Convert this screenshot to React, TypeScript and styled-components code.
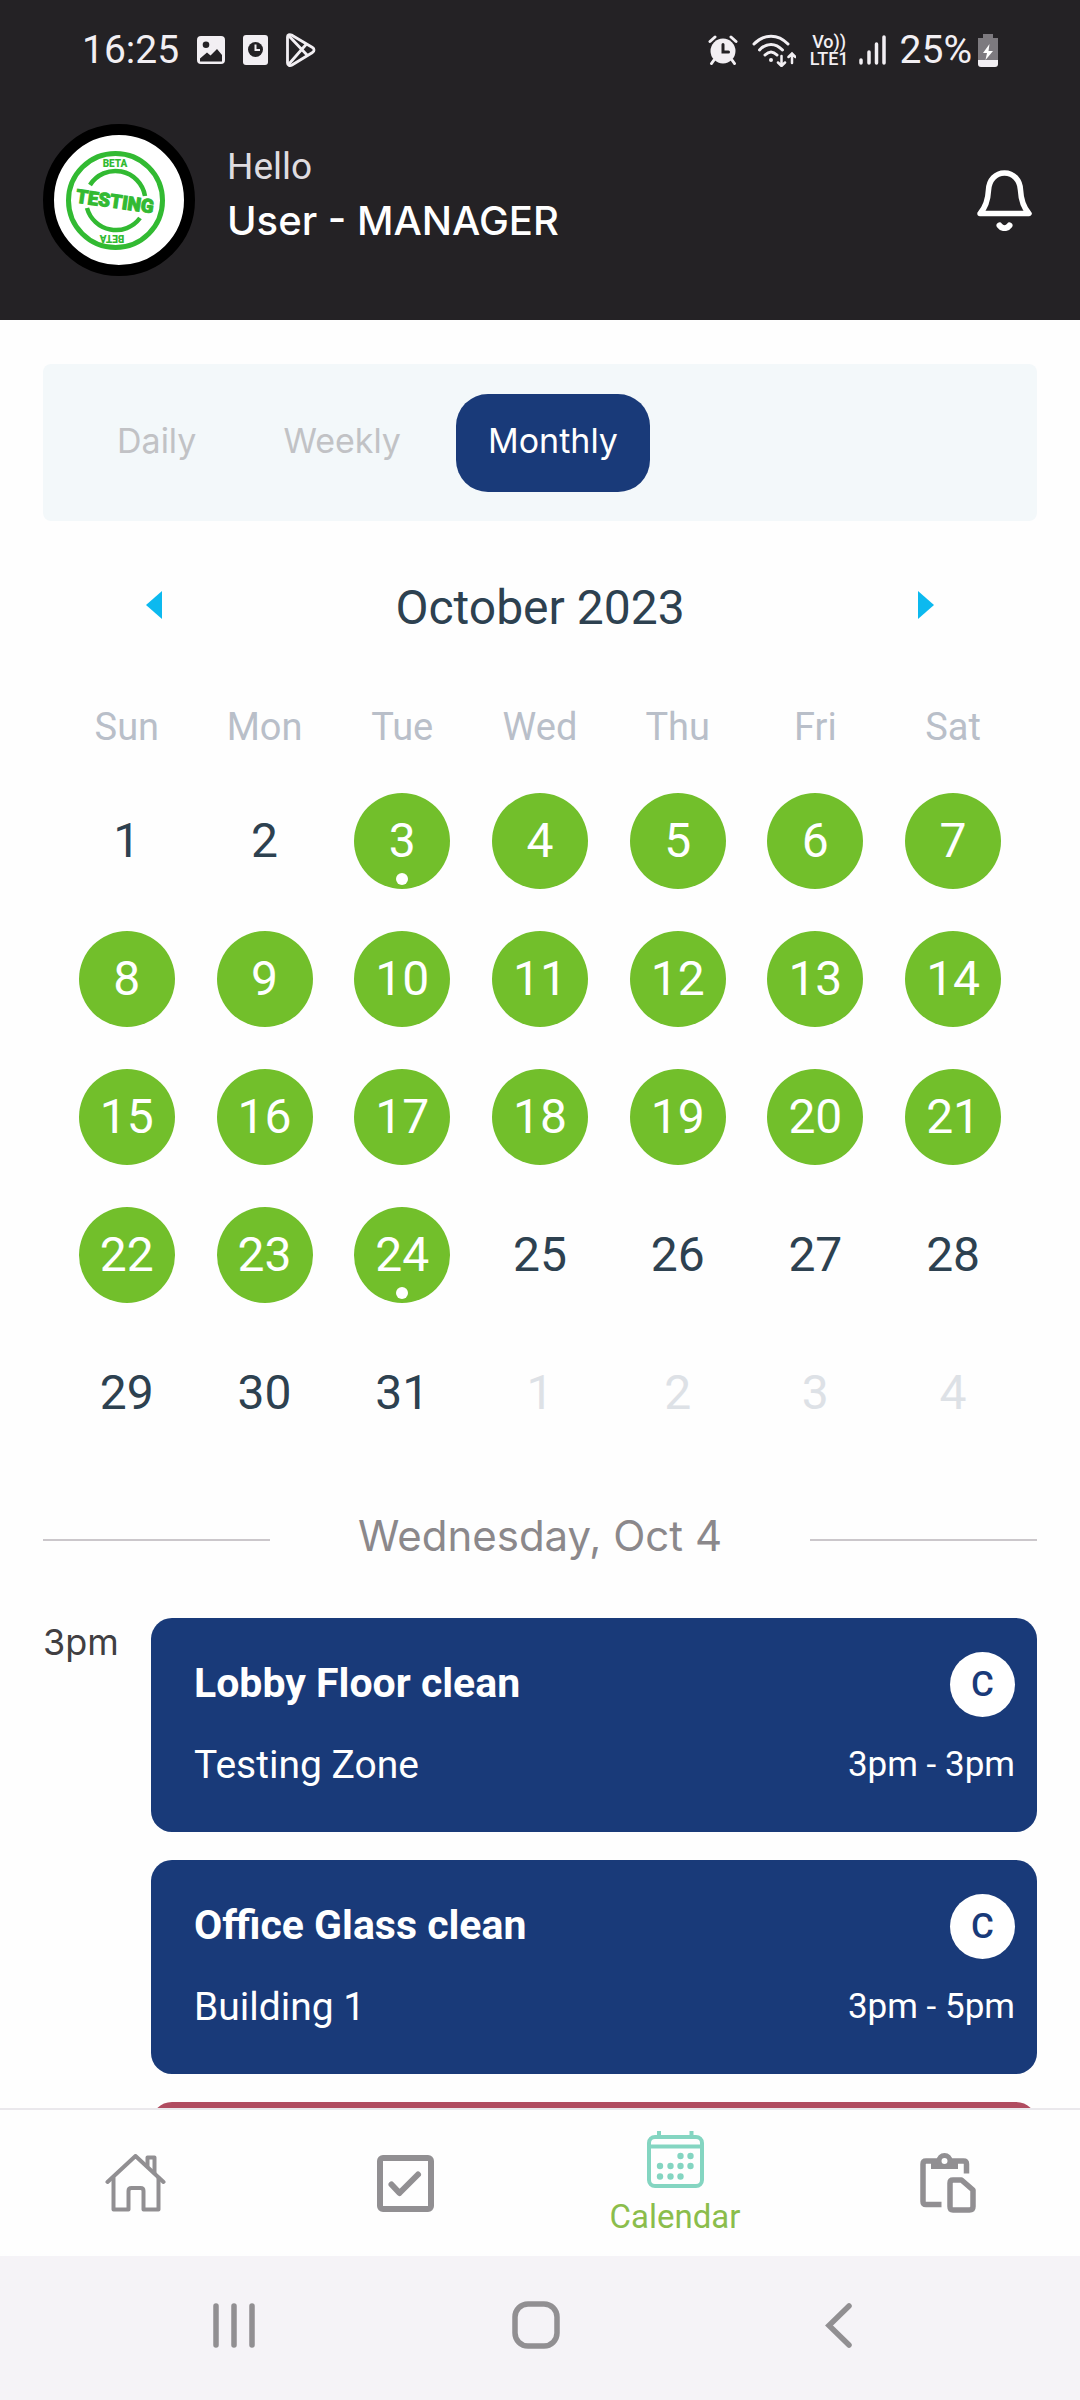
import React, { useState } from "react";
import styled, { createGlobalStyle } from "styled-components";

const roboto = `Roboto, "Noto Sans", sans-serif`;
const display = `Inter, "Noto Sans", sans-serif`;

const color = {
  dark: "#242225",
  light: "#f2eff3",
  navy: "#193a79",
  green: "#72bf2b",
  red: "#b04c60",
  ink: "#2d4150",
  grey: "#918f92",
  stamp: "#32ba32",
};

const GlobalStyle = createGlobalStyle`
  * { box-sizing: border-box; }
  body { margin: 0; background: #fefefe; font-family: ${roboto}; }
  h1, h2, h3, p { margin: 0; font-weight: 400; }
  button { border: 0; padding: 0; background: none; font: inherit; color: inherit; cursor: pointer; }
  svg { display: block; flex: none; }
`;

const Screen = styled.div`
  display: flex;
  flex-direction: column;
  height: 100vh;
`;

const TopBar = styled.header`
  flex: none;
  background: ${color.dark};
  color: ${color.light};
`;

const StatusBar = styled.div`
  display: flex;
  justify-content: space-between;
  height: 100px;
  padding: 0 82px;
  font-size: 39px;
  line-height: 40px;
`;

const StatusGroup = styled.div<{ $gap: number }>`
  display: flex;
  align-items: center;
  gap: ${(p) => p.$gap}px;
`;

const Network = styled.div`
  font-size: 18px;
  line-height: 17px;
  font-weight: 500;
  text-align: center;
`;

const Profile = styled.div`
  display: flex;
  align-items: center;
  padding: 24px 47px 44px 43px;
`;

const Avatar = styled.div`
  flex: none;
  border: 11px solid #000;
  border-radius: 50%;
  background: #fff;
  overflow: hidden;
`;

const Greeting = styled.div`
  flex: 1;
  padding: 0 32px 10px;
`;

const Hello = styled.p`
  font-size: 37px;
  line-height: 52px;
  color: #dfdce0;
`;

const UserName = styled.h1`
  font-family: ${display};
  font-size: 40px;
  line-height: 56px;
  font-weight: 500;
  color: #fff;
`;

const Main = styled.main`
  flex: 1;
  min-height: 0;
  overflow-y: auto;
  scrollbar-width: none;
  padding: 44px 43px 0;
`;

const Tabs = styled.div`
  display: flex;
  gap: 23px;
  padding: 30px 42px 29px;
  border-radius: 8px;
  background: #f3f8fa;
`;

const Tab = styled.button<{ $active: boolean }>`
  height: 98px;
  padding: 0 32px 6px;
  border-radius: 32px;
  font-family: ${display};
  font-size: 34px;
  color: ${(p) => (p.$active ? "#fff" : "#c1c2c5")};
  background: ${(p) => (p.$active ? color.navy : "transparent")};
`;

const Calendar = styled.section`
  padding: 39px 15px 0;
`;

const MonthRow = styled.div`
  display: flex;
  align-items: center;
  justify-content: space-between;
  height: 96px;
  padding: 0 64px;
  margin-bottom: 26px;
`;

const MonthTitle = styled.h2`
  font-size: 48px;
  line-height: 96px;
  color: ${color.ink};
`;

const ArrowButton = styled.button`
  display: grid;
  place-items: center;
  width: 64px;
  height: 64px;
  padding-bottom: 6px;
  color: #0cb9ef;
`;

const MonthTable = styled.table`
  width: 100%;
  table-layout: fixed;
  border-collapse: collapse;

  th {
    height: 90px;
    padding: 0;
    font-size: 38px;
    font-weight: 400;
    color: #b9bfc9;
  }
  td {
    height: 138px;
    padding: 0;
  }
`;

const Day = styled.button<{ $kind: DayKind }>`
  position: relative;
  display: block;
  width: 96px;
  height: 96px;
  margin: 0 auto;
  border-radius: 50%;
  font-size: 48px;
  line-height: 94px;
  background: ${(p) => (p.$kind === "marked" ? color.green : "transparent")};
  color: ${(p) =>
    p.$kind === "marked" ? "#fff" : p.$kind === "outside" ? "#dde1e6" : color.ink};
`;

const Dot = styled.span`
  position: absolute;
  left: 42px;
  bottom: 4px;
  width: 12px;
  height: 12px;
  border-radius: 50%;
  background: #fff;
`;

const DateDivider = styled.div`
  display: flex;
  align-items: center;
  justify-content: space-between;
  margin: 44px 0;
`;

const Rule = styled.span`
  width: 227px;
  height: 2px;
  background: #cbc7cb;
`;

const DateTitle = styled.h2`
  padding-bottom: 8px;
  font-family: ${display};
  font-size: 42px;
  line-height: 60px;
  color: #8b888b;
`;

const Schedule = styled.section`
  display: flex;
`;

const Hour = styled.p`
  width: 108px;
  flex: none;
  padding-top: 2px;
  font-family: ${display};
  font-size: 36px;
  line-height: 44px;
  color: #413f42;
`;

const EventList = styled.div`
  flex: 1;
  display: flex;
  flex-direction: column;
  gap: 28px;
`;

const EventCard = styled.article<{ $tone: string }>`
  min-height: 214px;
  padding: 34px 22px 32px 43px;
  border-radius: 21px;
  color: #fff;
  background: ${(p) => p.$tone};
`;

const EventRow = styled.div`
  display: flex;
  align-items: center;
  justify-content: space-between;
  min-height: 60px;

  & + & {
    margin-top: 18px;
  }
`;

const EventTitle = styled.h3`
  font-size: 41px;
  line-height: 48px;
  font-weight: 700;
  padding-bottom: 4px;
`;

const EventPlace = styled.p`
  font-size: 39px;
  line-height: 48px;
`;

const EventTime = styled.p`
  font-size: 35px;
  line-height: 48px;
`;

const Badge = styled.span`
  display: grid;
  place-items: center;
  width: 65px;
  height: 65px;
  border-radius: 50%;
  font-size: 35px;
  font-weight: 500;
  color: ${color.navy};
  background: #fff;
`;

const BottomNav = styled.nav`
  flex: none;
  display: grid;
  grid-template-columns: repeat(4, 1fr);
  height: 148px;
  border-top: 2px solid #eae8ec;
  background: #fefefe;
`;

const NavLink = styled.a<{ $active?: boolean }>`
  display: flex;
  flex-direction: column;
  align-items: center;
  justify-content: center;
  gap: 11px;
  font-size: 33px;
  line-height: 36px;
  text-decoration: none;
  color: ${(p) => (p.$active ? "#8bbd4c" : color.grey)};
`;

const SystemBar = styled.div`
  flex: none;
  display: grid;
  grid-template-columns: repeat(3, 1fr);
  height: 144px;
  padding: 0 91px 6px 83px;
  color: ${color.grey};
  background: #f5f3f7;
`;

const SystemButton = styled.button`
  display: grid;
  place-items: center;
`;

const ImageIcon = () => (
  <svg width="28" height="28" viewBox="0 0 28 28">
    <path
      fill={color.light}
      fillRule="evenodd"
      d="M4 0h20a4 4 0 0 1 4 4v20a4 4 0 0 1-4 4H4a4 4 0 0 1-4-4V4a4 4 0 0 1 4-4Zm5 5.500a3.300 3.300 0 1 0 0 6.600 3.300 3.300 0 0 0 0-6.600ZM3 25.500h22v-6.500l-5-6-6.500 6.500-3.500-3-7 6Z"
    />
  </svg>
);

const ClockCardIcon = () => (
  <svg width="25" height="30" viewBox="0 0 25 30" fill="none">
    <rect width="25" height="30" rx="3" fill={color.light} />
    <circle cx="12.500" cy="14.500" r="7.500" fill={color.dark} />
    <path d="M12.500 9.500v5.500h4.500" stroke={color.light} strokeWidth="2" />
  </svg>
);

const PlayIcon = () => (
  <svg width="30" height="34" viewBox="0 0 30 34" fill="none" stroke={color.light} strokeWidth="2.800" strokeLinejoin="round">
    <path d="M1.500 4c0-2 2-3 4-2l21 12.500c2 1.200 2 3.500 0 5L6 32c-2 1.200-4.500.500-4.500-2Z" />
    <path d="M2.500 31.500 20.500 11M3 3l18 19" />
  </svg>
);

const AlarmIcon = () => (
  <svg width="30" height="30" viewBox="0 0 30 30" fill="none" strokeLinecap="round">
    <circle cx="15" cy="16" r="12.500" fill={color.light} />
    <path d="M2 6.500 7 2M28 6.500 23 2M6 25l-2.500 3.500M24 25l2.500 3.500" stroke={color.light} strokeWidth="3" />
    <path d="M15 9.500V17h5.500" stroke={color.dark} strokeWidth="3" />
  </svg>
);

const WifiIcon = () => (
  <svg width="44" height="34" viewBox="0 0 44 34" fill="none" stroke={color.light} strokeWidth="3" strokeLinecap="round">
    <path d="M2 11C12 .500 26 .500 36 11M7.500 17c7-7.500 16-7.500 23 0M13 22c4-4 8-4 12 0" />
    <circle cx="19" cy="27" r="2" fill={color.light} stroke="none" />
    <path strokeWidth="2.500" d="M29.500 23v9.500M26 29.500l3.500 3.500 3.500-3.500M40 30v-9.500M36.500 24l3.500-3.500 3.500 3.500" />
  </svg>
);

const SignalIcon = () => (
  <svg width="27" height="30" viewBox="0 0 27 30" stroke={color.light} strokeWidth="3.500" strokeLinecap="round">
    <path d="M2 25v3M10 17v11M17.500 9v19M25 2v26" />
  </svg>
);

const BatteryIcon = () => (
  <svg width="20" height="33" viewBox="0 0 20 33">
    <path d="M5 0h10v4h5v22H0V4h5Z" fill="#7d7a7f" />
    <path d="M0 26h20v4a3 3 0 0 1-3 3H3a3 3 0 0 1-3-3Z" fill={color.light} />
    <path d="M11.500 10 5 19h4l-1.500 7L15 17h-4.500Z" fill="#fff" />
  </svg>
);

const StampLogo = () => (
  <svg width="130" height="130" viewBox="0 0 130 130" fill="none" stroke={color.stamp} role="img" aria-label="Testing beta stamp">
    <circle cx="61.500" cy="65.500" r="47" strokeWidth="5" />
    <path d="M36 50A30 30 0 0 1 91 61M33 73A30 30 0 0 0 86 83" strokeWidth="4.500" />
    <g fill={color.stamp} stroke="none" fontFamily={roboto} fontWeight="900" textAnchor="middle">
      <text x="61" y="32" fontSize="10">BETA</text>
      <text x="58" y="-100" fontSize="10" transform="rotate(180 58 0)">BETA</text>
      <text x="61" y="73" fontSize="19" stroke={color.stamp} strokeWidth="1" transform="rotate(8 61 66)">TESTING</text>
    </g>
  </svg>
);

const BellIcon = () => (
  <svg width="56" height="61" viewBox="0 0 56 61" fill="none" stroke="#fff" strokeWidth="5.500" strokeLinecap="round" strokeLinejoin="round">
    <path d="M3 43.500C9 37 11 30 11.500 20 12 10 18.500 3 27.500 3S43 10 43.500 20C44 30 46 37 52 43.500Z" />
    <path d="M22.500 55.500c2.500 3.500 7.500 3.500 10 0" strokeWidth="6" />
  </svg>
);

const HomeIcon = () => (
  <svg width="61" height="58" viewBox="0 0 61 58" fill="none" stroke="currentColor" strokeWidth="4" strokeLinecap="round" strokeLinejoin="round">
    <path d="M2.500 28 30.500 2l28 26" />
    <path d="M8.500 24v31.500h15V37q0-3 3-3h9q3 0 3 3v18.500h15V24" />
    <path d="M42.500 12V3.500h7V19" />
  </svg>
);

const CheckIcon = () => (
  <svg width="57" height="57" viewBox="0 0 57 57" fill="none" stroke="currentColor" strokeWidth="6" strokeLinecap="round" strokeLinejoin="round">
    <rect x="3" y="3" width="51" height="51" rx="3" />
    <path d="m14.500 29.500 8 8.500L41 19.500" />
  </svg>
);

const CalendarIcon = () => (
  <svg width="57" height="57" viewBox="0 0 57 57" fill="none" stroke="#84d5c1" strokeWidth="4">
    <rect x="2" y="6" width="53" height="49" rx="6" />
    <path d="M2 15.500h53M12 0v6M44.500 0v6" />
    <g fill="#84d5c1" stroke="none">
      {[[33.5, 25], [43.5, 25], [13, 35], [23.5, 35], [33.5, 35], [43.5, 35], [13, 45.5], [23.5, 45.5], [33.5, 45.5]].map(
        ([x, y]) => (
          <circle key={`${x}-${y}`} cx={x} cy={y} r="3.200" />
        )
      )}
    </g>
  </svg>
);

const ClipboardIcon = () => (
  <svg width="62" height="60" viewBox="-6 0 62 60" fill="none" stroke="currentColor" strokeWidth="5.500" strokeLinejoin="round">
    <path d="M21.500 51.500H6Q3 51.500 3 48.500V11Q3 8 6 8H43.500Q46.500 8 46.500 11V20.500" />
    <path d="M11 9.500h27v6.500H11Z" fill="currentColor" stroke="none" />
    <circle cx="24.500" cy="8" r="5.500" fill="#fefefe" strokeWidth="5" />
    <path d="M33 27h8.500L53 37v16.500q0 3.500-3.500 3.500H33q-3 0-3-3.500V30q0-3 3-3Z" />
  </svg>
);

const RecentsIcon = () => (
  <svg width="42" height="45" viewBox="0 0 42 45" stroke="currentColor" strokeWidth="5.500" strokeLinecap="round">
    <path d="M3 3v39M21 3v39M39 3v39" />
  </svg>
);

const HomeKeyIcon = () => (
  <svg width="48" height="48" viewBox="0 0 48 48" fill="none" stroke="currentColor" strokeWidth="5.500">
    <rect x="3" y="3" width="42" height="42" rx="13" />
  </svg>
);

const BackIcon = () => (
  <svg width="27" height="45" viewBox="0 0 27 45" fill="none" stroke="currentColor" strokeWidth="5.500" strokeLinecap="round">
    <path d="M24 3 4 22.500 24 42" />
  </svg>
);

type DayKind = "plain" | "marked" | "outside";

const weekdays = ["Sun", "Mon", "Tue", "Wed", "Thu", "Fri", "Sat"];

const weeks = Array.from({ length: 5 }, (_, week) =>
  Array.from({ length: 7 }, (_, day) => {
    const n = week * 7 + day + 1;
    const kind: DayKind = n > 31 ? "outside" : n >= 3 && n <= 24 ? "marked" : "plain";
    return { label: n > 31 ? n - 31 : n, kind, dot: n === 3 || n === 24 };
  })
);

const events = [
  { title: "Lobby Floor clean", place: "Testing Zone", time: "3pm - 3pm", badge: "C" },
  { title: "Office Glass clean", place: "Building 1", time: "3pm - 5pm", badge: "C" },
];

export default function App() {
  const [view, setView] = useState("Monthly");

  return (
    <Screen>
      <GlobalStyle />
      <TopBar>
        <StatusBar>
          <StatusGroup $gap={18}>
            <span>16:25</span>
            <ImageIcon />
            <ClockCardIcon />
            <PlayIcon />
          </StatusGroup>
          <StatusGroup $gap={14}>
            <AlarmIcon />
            <WifiIcon />
            <StatusGroup $gap={10}>
              <Network>
                <div>Vo))</div>
                <div>LTE1</div>
              </Network>
              <SignalIcon />
            </StatusGroup>
            <StatusGroup $gap={6}>
              <span>25%</span>
              <BatteryIcon />
            </StatusGroup>
          </StatusGroup>
        </StatusBar>
        <Profile>
          <Avatar>
            <StampLogo />
          </Avatar>
          <Greeting>
            <Hello>Hello</Hello>
            <UserName>User - MANAGER</UserName>
          </Greeting>
          <button type="button" aria-label="Notifications">
            <BellIcon />
          </button>
        </Profile>
      </TopBar>

      <Main>
        <Tabs role="tablist">
          {["Daily", "Weekly", "Monthly"].map((name) => (
            <Tab
              key={name}
              type="button"
              role="tab"
              aria-selected={view === name}
              $active={view === name}
              onClick={() => setView(name)}
            >
              {name}
            </Tab>
          ))}
        </Tabs>

        <Calendar>
          <MonthRow>
            <ArrowButton type="button" aria-label="Previous month">
              <svg width="16" height="28" viewBox="0 0 16 28" fill="currentColor">
                <path d="M16 0v28L0 14Z" />
              </svg>
            </ArrowButton>
            <MonthTitle>October 2023</MonthTitle>
            <ArrowButton type="button" aria-label="Next month">
              <svg width="16" height="28" viewBox="0 0 16 28" fill="currentColor">
                <path d="M0 0v28l16-14Z" />
              </svg>
            </ArrowButton>
          </MonthRow>
          <MonthTable>
            <thead>
              <tr>
                {weekdays.map((name) => (
                  <th key={name} scope="col">{name}</th>
                ))}
              </tr>
            </thead>
            <tbody>
              {weeks.map((week, i) => (
                <tr key={i}>
                  {week.map((day) => (
                    <td key={day.label}>
                      <Day type="button" $kind={day.kind}>
                        {day.label}
                        {day.dot && <Dot />}
                      </Day>
                    </td>
                  ))}
                </tr>
              ))}
            </tbody>
          </MonthTable>
        </Calendar>

        <DateDivider>
          <Rule />
          <DateTitle>Wednesday, Oct 4</DateTitle>
          <Rule />
        </DateDivider>

        <Schedule>
          <Hour>3pm</Hour>
          <EventList>
            {events.map((event) => (
              <EventCard key={event.title} $tone={color.navy}>
                <EventRow>
                  <EventTitle>{event.title}</EventTitle>
                  <Badge>{event.badge}</Badge>
                </EventRow>
                <EventRow>
                  <EventPlace>{event.place}</EventPlace>
                  <EventTime>{event.time}</EventTime>
                </EventRow>
              </EventCard>
            ))}
            <EventCard $tone={color.red} />
          </EventList>
        </Schedule>
      </Main>

      <BottomNav aria-label="Main">
        <NavLink href="#home" aria-label="Home">
          <HomeIcon />
        </NavLink>
        <NavLink href="#tasks" aria-label="Tasks">
          <CheckIcon />
        </NavLink>
        <NavLink href="#calendar" $active aria-current="page">
          <CalendarIcon />
          Calendar
        </NavLink>
        <NavLink href="#reports" aria-label="Reports">
          <ClipboardIcon />
        </NavLink>
      </BottomNav>

      <SystemBar>
        <SystemButton type="button" aria-label="Recent apps">
          <RecentsIcon />
        </SystemButton>
        <SystemButton type="button" aria-label="Home screen">
          <HomeKeyIcon />
        </SystemButton>
        <SystemButton type="button" aria-label="Back">
          <BackIcon />
        </SystemButton>
      </SystemBar>
    </Screen>
  );
}
